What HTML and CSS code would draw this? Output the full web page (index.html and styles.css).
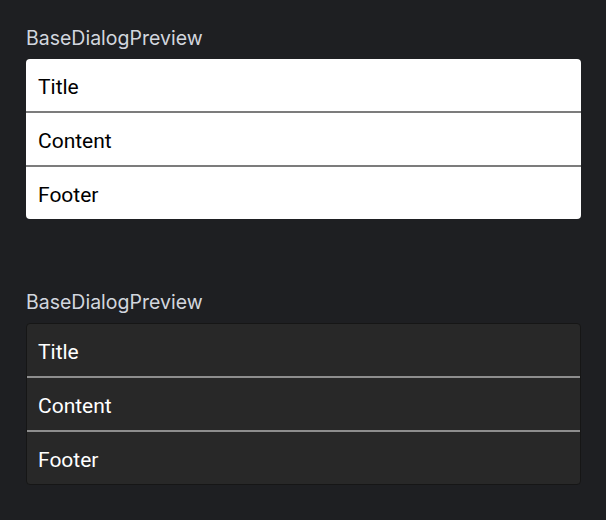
FILE: index.html
```html
<!DOCTYPE html>
<html>
<head>
<meta charset="utf-8">
<link rel="stylesheet" href="styles.css">
</head>
<body>
<div class="page">
  <section class="preview">
    <div class="label">BaseDialogPreview</div>
    <div class="dialog light">
      <div class="row">Title</div>
      <div class="sep"></div>
      <div class="row">Content</div>
      <div class="sep"></div>
      <div class="row">Footer</div>
    </div>
  </section>
  <section class="preview">
    <div class="label">BaseDialogPreview</div>
    <div class="dialog dark">
      <div class="row">Title</div>
      <div class="sep"></div>
      <div class="row">Content</div>
      <div class="sep"></div>
      <div class="row">Footer</div>
    </div>
  </section>
</div>
</body>
</html>
```
FILE: styles.css
```css
html, body {
  margin: 0;
  padding: 0;
  background: #1e1f22;
}
.page {
  padding: 26px 25px 0 26px;
  display: flex;
  flex-direction: column;
  gap: 71px;
}
.preview {
  display: flex;
  flex-direction: column;
  gap: 9px;
}
.label {
  font-family: Inter, "Noto Sans", sans-serif;
  font-size: 19.5px;
  line-height: 24px;
  color: #d2d6de;
}
.dialog {
  border-radius: 4px;
  overflow: hidden;
  display: flex;
  flex-direction: column;
  font-family: Roboto, "Noto Sans", sans-serif;
  font-size: 21px;
}
.row {
  height: 52px;
  box-sizing: border-box;
  padding-top: 3px;
  display: flex;
  align-items: center;
  padding-left: 12px;
}
.sep {
  height: 2px;
}
.light {
  background: #ffffff;
  color: #000000;
}
.light .sep {
  background: #7c7c7c;
}
.dark {
  background: #282828;
  color: #ffffff;
  border: 1px solid #161616;
}
.dark .row {
  padding-left: 11px;
}
.dark .sep {
  background: #8e8e8e;
}
```
